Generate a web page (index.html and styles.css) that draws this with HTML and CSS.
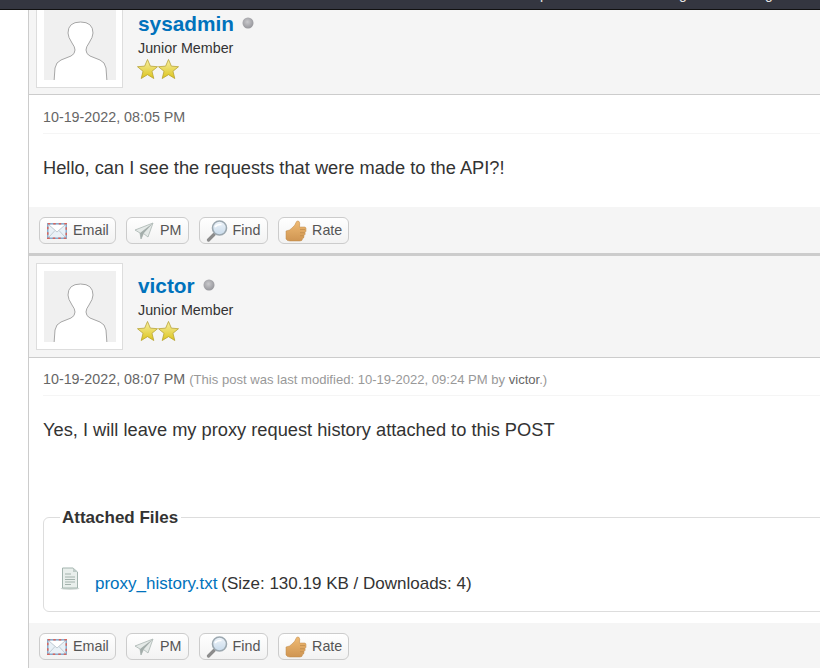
FILE: index.html
```html
<!DOCTYPE html>
<html lang="en">
<head>
<meta charset="utf-8">
<title>Thread</title>
<link rel="stylesheet" href="styles.css">
</head>
<body>
<svg class="defs" width="0" height="0" aria-hidden="true">
  <defs>
    <linearGradient id="gStar" x1="0" y1="0" x2="0" y2="1"><stop offset="0" stop-color="#f8f0a4"/><stop offset="1" stop-color="#dcc41c"/></linearGradient>
    <linearGradient id="gThumb" x1="0" y1="0" x2="0" y2="1"><stop offset="0" stop-color="#f0bb74"/><stop offset="1" stop-color="#cf9552"/></linearGradient>
    <linearGradient id="gLens" x1="0" y1="0" x2="0" y2="1"><stop offset="0" stop-color="#eef4fa"/><stop offset="1" stop-color="#c9dbeb"/></linearGradient>
    <radialGradient id="gDot" cx="0.45" cy="0.4" r="0.6"><stop offset="0" stop-color="#c9c9cc"/><stop offset="1" stop-color="#96969b"/></radialGradient>
    <symbol id="i-avatar" viewBox="0 0 72 71"><rect width="72" height="71" fill="#f0f0f0"/><path d="M10 73 L11 59 Q12 53 17 51 L27 47 Q31 45 31 41 Q31 38 28 34 Q24 28 24 24 Q24 13 36.5 13 Q49 13 49 24 Q49 28 45 34 Q42 38 42 41 Q42 45 46 47 L56 51 Q61 53 62 59 L63 73 Z" fill="#fff" stroke="#a6a6a6" stroke-width="1"/></symbol>
    <symbol id="i-star" viewBox="0 0 22 22"><path d="M11 1 L14 8 L21.500 8.600 L15.700 13.400 L17.600 21 L11 16.900 L4.400 21 L6.300 13.400 L.5 8.600 L8 8 Z" fill="url(#gStar)" stroke="#b5a030" stroke-width=".8"/></symbol>
    <symbol id="i-email" viewBox="0 0 20 18"><rect x=".75" y="1.750" width="18.500" height="14.500" fill="#e9f1f7" stroke="#86aed0" stroke-width="1.500"/><rect x=".75" y="1.750" width="18.500" height="14.500" fill="none" stroke="#d8665e" stroke-width="1.500" stroke-dasharray="2.500 3"/><path d="M2.500 3 L10 9.500 L17.500 3 Z" fill="#fff"/><path d="M2 3 L10 10 L18 3 M2 15 L8 8.500 M18 15 L12 8.500" fill="none" stroke="#c2ccd3" stroke-width="1"/></symbol>
    <symbol id="i-pm" viewBox="0 0 20 18"><path d="M1 8 L19 1 L14 15 L9.500 11.500 L7 17 L6 11 Z" fill="#e4e9e7" stroke="#aab5b1" stroke-width=".8"/><path d="M6 11 L19 1 L9.500 11.500 L7 17 Z" fill="#a3adaa"/></symbol>
    <symbol id="i-find" viewBox="0 0 22 22"><path d="M2.500 20 L8 14.500" stroke="#8c8c8c" stroke-width="3.200" stroke-linecap="round"/><circle cx="13.500" cy="8" r="7" fill="url(#gLens)" stroke="#9ca8b0" stroke-width="1.600"/><path d="M9 7 Q11 4 15.500 4.500" fill="none" stroke="#fff" stroke-width="1.400"/></symbol>
    <symbol id="i-rate" viewBox="0 0 22 22"><path d="M1 11 Q5 10.500 7 8 Q10.500 5 11 2.500 Q11.500 .5 13.500 1 Q15.500 2 14.500 7 H20 Q21.500 7.500 21 9.500 Q21.500 11.500 20 12.500 Q20.800 14.500 19 15.500 Q19.500 18 17.500 18.500 Q17.500 21 15 21 H5 Q2 21 1 19 Z" fill="url(#gThumb)" stroke="#bd894a" stroke-width=".5"/><path d="M15 9.500 H20 M15 12.700 H19.500 M15 15.700 H18.500" stroke="#bd894a" stroke-width=".7"/></symbol>
    <symbol id="i-doc" viewBox="0 0 20 24"><ellipse cx="10" cy="21.500" rx="9.500" ry="1.500" fill="#d5dcd9"/><path d="M2.500 1 H13 L17.500 5 V21 H2.500 Z" fill="#e9efec" stroke="#a3b4ae" stroke-width="1"/><path d="M13 1 V5 H17.500 Z" fill="#bfccc7"/><path d="M5 7 H11 M5 10 H15 M5 12.500 H15 M5 15 H15 M5 17.500 H11" stroke="#a3b2ac" stroke-width="1"/></symbol>
  </defs>
</svg>

<header class="topbar">
  <span class="tip tip-p">p</span>
  <span class="tip tip-g1">g</span>
  <span class="tip tip-g2">g</span>
</header>

<main class="thread">
  <article class="post post-first">
    <div class="author">
      <div class="avatar"><svg class="avatar-img"><use href="#i-avatar"/></svg></div>
      <div class="author-info">
        <div class="name-row"><a class="name">sysadmin</a><svg class="dot" viewBox="0 0 12 12"><circle cx="6" cy="6" r="5.500" fill="url(#gDot)"/></svg></div>
        <div class="title">Junior Member</div>
        <div class="stars"><svg class="star"><use href="#i-star"/></svg><svg class="star"><use href="#i-star"/></svg></div>
      </div>
    </div>
    <div class="content">
      <div class="date">10-19-2022, 08:05 PM</div>
      <div class="message">Hello, can I see the requests that were made to the API?!</div>
    </div>
    <div class="controls">
      <a class="btn btn-email"><svg class="ic-email"><use href="#i-email"/></svg><span class="btn-label">Email</span></a>
      <a class="btn btn-pm"><svg class="ic-pm"><use href="#i-pm"/></svg><span class="btn-label">PM</span></a>
      <a class="btn btn-find"><svg class="ic-find"><use href="#i-find"/></svg><span class="btn-label">Find</span></a>
      <a class="btn btn-rate"><svg class="ic-rate"><use href="#i-rate"/></svg><span class="btn-label">Rate</span></a>
    </div>
  </article>

  <article class="post post-second">
    <div class="author">
      <div class="avatar"><svg class="avatar-img"><use href="#i-avatar"/></svg></div>
      <div class="author-info">
        <div class="name-row"><a class="name">victor</a><svg class="dot" viewBox="0 0 12 12"><circle cx="6" cy="6" r="5.500" fill="url(#gDot)"/></svg></div>
        <div class="title">Junior Member</div>
        <div class="stars"><svg class="star"><use href="#i-star"/></svg><svg class="star"><use href="#i-star"/></svg></div>
      </div>
    </div>
    <div class="content">
      <div class="date">10-19-2022, 08:07 PM <span class="edited">(This post was last modified: 10-19-2022, 09:24 PM by <a class="editor">victor</a>.)</span></div>
      <div class="message">Yes, I will leave my proxy request history attached to this POST</div>
      <fieldset class="attachments">
        <legend>Attached Files</legend>
        <div class="attachment"><svg class="ic-doc"><use href="#i-doc"/></svg><a class="file">proxy_history.txt</a> (Size: 130.19 KB / Downloads: 4)</div>
      </fieldset>
    </div>
    <div class="controls">
      <a class="btn btn-email"><svg class="ic-email"><use href="#i-email"/></svg><span class="btn-label">Email</span></a>
      <a class="btn btn-pm"><svg class="ic-pm"><use href="#i-pm"/></svg><span class="btn-label">PM</span></a>
      <a class="btn btn-find"><svg class="ic-find"><use href="#i-find"/></svg><span class="btn-label">Find</span></a>
      <a class="btn btn-rate"><svg class="ic-rate"><use href="#i-rate"/></svg><span class="btn-label">Rate</span></a>
    </div>
  </article>
</main>
</body>
</html>
```

FILE: styles.css
```css
* { box-sizing: border-box; }
html, body { margin: 0; height: 668px; overflow: hidden; background: #fff; }
body { font-family: "Liberation Sans", Arial, sans-serif; color: #333; }
.defs { position: absolute; }

.topbar {
  position: fixed; top: 0; left: 0; right: 0; height: 10px; z-index: 5;
  background: #343640; border-bottom: 1px solid #111; overflow: hidden;
}
.tip { position: absolute; top: -14px; font-size: 14px; line-height: 16px; color: #e8e8e8; }
.tip-p { left: 540px; }
.tip-g1 { left: 679px; }
.tip-g2 { left: 765px; }

.thread { margin: -6px 0 0 28px; width: 830px; border-left: 1px solid #ccc; }
.post { border-top: 3px solid #ccc; }
.post-first { border-top: 0; }

.author { display: flex; height: 102px; padding: 7px; background: #f5f5f5; border-bottom: 1px solid #ccc; }
.post-first .author { height: 101px; }
.avatar { width: 87px; height: 87px; padding: 7px; background: #fff; border: 1px solid #ddd; }
.avatar-img { display: block; width: 72px; height: 71px; }
.author-info { margin-left: 15px; padding-top: 9px; }
.name-row { display: flex; align-items: flex-start; height: 27px; }
.name { font-size: 20.8px; line-height: 28px; font-weight: bold; color: #0072bc; }
.dot { width: 12px; height: 12px; margin: 7px 0 0 8px; }
.title { font-size: 14.3px; line-height: 18px; margin-top: 2px; }
.stars { display: flex; height: 22px; margin: 1px 0 0 -1px; }
.star { width: 21px; height: 22px; }

.content { padding: 0 14px; background: #fff; }
.date { height: 39px; padding-top: 14px; font-size: 14.3px; line-height: 16px; color: #666; border-bottom: 1px solid #f5f5f5; }
.post-second .date { height: 38px; padding-top: 13px; }
.edited { font-size: 13.07px; line-height: 13px; color: #999; }
.editor { color: #666; }
.message { font-size: 18.25px; line-height: 26px; padding-top: 21px; height: 73px; }

.attachments { margin: 37px 0 11px; padding: 44px 10px 0 17px; border: 1px solid #ddd; border-radius: 6px; min-width: 0; height: 106px; }
.attachments legend { padding: 2px 3px 0 2px; margin-left: -1px; font-size: 17px; font-weight: bold; line-height: 20px; }
.attachment { display: flex; align-items: flex-start; font-size: 17px; line-height: 24px; white-space: pre; }
.ic-doc { width: 20px; height: 24px; margin: -5px 15px 0 -1px; }
.file { color: #0072bc; margin-right: -1px; }

.controls { display: flex; gap: 10px; height: 46px; padding: 10px; background: #f5f5f5; }
.btn {
  display: flex; align-items: center; height: 27px; padding: 0 6.2px 0 7px;
  border: 1px solid #ccc; border-radius: 6px; font-size: 14.3px; color: #555;
  background: linear-gradient(#fff, #f2f2f2);
}
.btn svg { margin-right: 6px; flex: none; }
.btn-label { position: relative; top: -1px; }
.ic-email { width: 20px; height: 18px; }
.ic-pm { width: 20px; height: 18px; }
.ic-find { width: 22px; height: 22px; }
.ic-rate { width: 22px; height: 22px; }
.btn-find svg, .btn-rate svg { margin-left: -1px; margin-right: 5px; }
.btn-find { padding-right: 6.7px; }
```
